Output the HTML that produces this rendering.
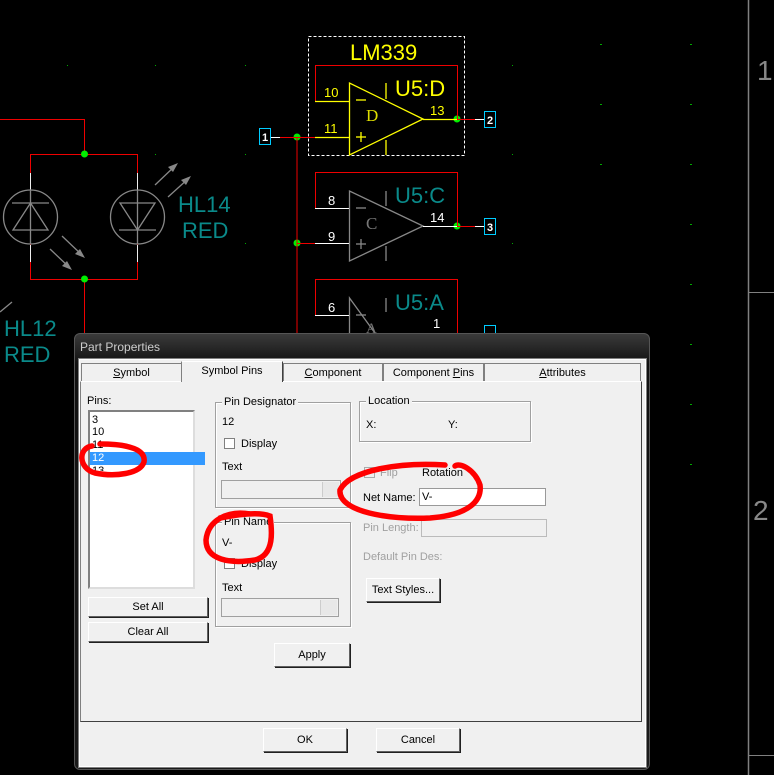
<!DOCTYPE html>
<html><head><meta charset="utf-8"><style>
body{margin:0;width:774px;height:775px;background:#000;overflow:hidden;position:relative;font-family:"Liberation Sans",sans-serif;}
.a{position:absolute;}
.t{position:absolute;font-size:11px;color:#000;white-space:nowrap;line-height:12px;}
.g{color:#a0a0a0;}
.btn{position:absolute;background:#f0f0f0;border:1px solid #fff;border-right-color:#606060;border-bottom-color:#606060;box-shadow:1px 1px 0 #202020;font-size:11px;text-align:center;box-sizing:border-box;}
.grp{position:absolute;border:1px solid #a0a0a0;box-shadow:1px 1px 0 #fff inset,1px 1px 0 #fff;}
.lg{position:absolute;background:#f0f0f0;font-size:11px;padding:0 2px;top:-7px;left:6px;line-height:12px;}
.cb{position:absolute;width:11px;height:11px;border:1px solid #808080;background:#fff;box-sizing:border-box;}
.combo{position:absolute;border:1px solid #a0a0a0;background:#f0f0f0;box-sizing:border-box;}
.combo:after{content:"";position:absolute;right:1px;top:1px;width:16px;bottom:1px;background:#e8e8e8;border-left:1px solid #ccc;}
.tab{position:absolute;top:363px;height:18px;border:1px solid #808080;border-bottom:none;background:#f0f0f0;font-size:11px;text-align:center;line-height:18px;box-sizing:border-box;}
</style></head><body>
<svg class="a" style="left:0;top:0" width="774" height="775">
<g fill="#0a0">
<rect x="67" y="65" width="1" height="1"/><rect x="155" y="65" width="1" height="1"/><rect x="245" y="65" width="1" height="1"/><rect x="512" y="65" width="1" height="1"/><rect x="600" y="44" width="2" height="1"/><rect x="690" y="44" width="2" height="1"/>
<rect x="155" y="154" width="1" height="1"/><rect x="245" y="154" width="1" height="1"/><rect x="512" y="154" width="1" height="1"/><rect x="600" y="104" width="2" height="1"/><rect x="690" y="104" width="2" height="1"/><rect x="600" y="164" width="2" height="1"/><rect x="690" y="164" width="2" height="1"/>
<rect x="245" y="243" width="1" height="1"/><rect x="512" y="243" width="1" height="1"/><rect x="690" y="224" width="2" height="1"/><rect x="690" y="284" width="2" height="1"/><rect x="690" y="344" width="2" height="1"/><rect x="690" y="404" width="2" height="1"/><rect x="690" y="464" width="2" height="1"/>
</g>
<line x1="748.5" y1="0" x2="748.5" y2="775" stroke="#808080" stroke-width="1.5"/>
<line x1="748" y1="292.5" x2="774" y2="292.5" stroke="#808080"/>
<line x1="748" y1="755.5" x2="774" y2="755.5" stroke="#808080"/>
<text x="757" y="80" fill="#888" font-size="28" font-family="Liberation Sans">1</text>
<text x="753" y="520" fill="#888" font-size="28" font-family="Liberation Sans">2</text>
<!-- LED section -->
<g fill="none" stroke="#e00" stroke-width="1">
<polyline points="0,119.5 84.5,119.5 84.5,154"/>
<rect x="30.5" y="154.5" width="107" height="125"/>
<line x1="84.5" y1="279" x2="84.5" y2="340"/>
</g>
<g stroke="#eee"><line x1="30.5" y1="173" x2="30.5" y2="195"/><line x1="30.5" y1="245" x2="30.5" y2="262"/><line x1="137.5" y1="173" x2="137.5" y2="195"/><line x1="137.5" y1="245" x2="137.5" y2="262"/></g>
<g stroke="#888" fill="none" stroke-width="1.3">
<circle cx="30.5" cy="217" r="27"/><circle cx="137.5" cy="217" r="27"/>
<line x1="30.5" y1="190" x2="30.5" y2="244"/><line x1="12" y1="203" x2="49" y2="203"/><polygon points="30.5,203 13,230 48,230"/>
<line x1="137.5" y1="190" x2="137.5" y2="244"/><line x1="119" y1="230" x2="156" y2="230"/><polygon points="137.5,230 120,203 155,203"/>
<line x1="155" y1="185" x2="176" y2="165"/><line x1="168" y1="197" x2="189" y2="178"/>
<line x1="62" y1="236" x2="83" y2="256"/><line x1="50" y1="249" x2="70" y2="268"/>
<line x1="0" y1="312" x2="12" y2="302"/>
</g>
<g fill="#888"><polygon points="178,163 168,167 173,172"/><polygon points="191,176 181,180 186,185"/><polygon points="85,258 75,254 80,249"/><polygon points="72,270 62,266 67,261"/></g>
<g fill="#0e0"><circle cx="84.5" cy="154" r="3.5"/><circle cx="84.5" cy="279" r="3.5"/><circle cx="297" cy="137" r="3.5"/><circle cx="297" cy="243" r="3.5"/><circle cx="457" cy="119" r="3.5"/><circle cx="457" cy="226" r="3.5"/><circle cx="297" cy="349" r="4" opacity=".6"/></g>
<g font-family="Liberation Sans" font-size="22" fill="#0a8a8a">
<text x="178" y="212">HL14</text><text x="182" y="238">RED</text>
<text x="4" y="336">HL12</text><text x="4" y="362">RED</text>
</g>
<!-- U5 -->
<rect x="308.5" y="36.5" width="156" height="119" fill="none" stroke="#fff" stroke-dasharray="3,2"/>
<text x="350" y="60" fill="#ff0" font-size="22" font-family="Liberation Sans">LM339</text>
<g fill="none" stroke="#e00">
<polyline points="315.5,101 315.5,65.5 457.5,65.5 457.5,119"/>
<polyline points="315.5,208 315.5,172.5 457.5,172.5 457.5,226"/>
<polyline points="315.5,315 315.5,279.5 457.5,279.5 457.5,333"/>
<line x1="297" y1="137" x2="297" y2="340"/>
<line x1="280" y1="137.5" x2="315" y2="137.5"/>
<line x1="297" y1="243.5" x2="315" y2="243.5"/>
<line x1="457" y1="119.5" x2="475" y2="119.5"/><line x1="457" y1="226.5" x2="475" y2="226.5"/>
</g>
<g stroke="#ff0" fill="none" stroke-width="1.3">
<polygon points="349.5,83 349.5,155 423,119"/><line x1="315" y1="101.5" x2="349" y2="101.5"/><line x1="315" y1="137.5" x2="349" y2="137.5"/><line x1="423" y1="119.5" x2="457" y2="119.5"/>
<line x1="386" y1="83" x2="386" y2="99"/><line x1="386" y1="140" x2="386" y2="155"/>
<line x1="356" y1="100" x2="366" y2="100"/><line x1="356" y1="137" x2="366" y2="137"/><line x1="361" y1="132" x2="361" y2="142"/>
</g>
<g fill="#ff0" font-family="Liberation Sans"><text x="395" y="96" font-size="22">U5:D</text><text x="366" y="121" font-size="17" font-family="Liberation Serif" fill="#dd0">D</text><text x="324" y="97" font-size="13">10</text><text x="324" y="133" font-size="13">11</text><text x="430" y="115" font-size="13">13</text></g>
<g stroke="#888" fill="none" stroke-width="1.3">
<polygon points="349.5,191 349.5,261 423,226"/><line x1="386" y1="191" x2="386" y2="206"/><line x1="386" y1="246" x2="386" y2="261"/>
<line x1="356" y1="208" x2="366" y2="208"/><line x1="356" y1="244" x2="366" y2="244"/><line x1="361" y1="239" x2="361" y2="249"/>
<polygon points="349.5,298 349.5,340 380,340"/><line x1="386" y1="298" x2="386" y2="312"/><line x1="356" y1="315" x2="366" y2="315"/>
</g>
<g stroke="#fff"><line x1="315" y1="208.5" x2="349" y2="208.5"/><line x1="315" y1="243.5" x2="349" y2="243.5"/><line x1="423" y1="226.5" x2="457" y2="226.5"/><line x1="315" y1="315.5" x2="349" y2="315.5"/><line x1="270" y1="137.5" x2="280" y2="137.5"/><line x1="475" y1="119.5" x2="484" y2="119.5"/><line x1="475" y1="226.5" x2="484" y2="226.5"/></g>
<g font-family="Liberation Sans"><text x="395" y="203" font-size="22" fill="#0a8a8a">U5:C</text><text x="395" y="310" font-size="22" fill="#0a8a8a">U5:A</text>
<text x="366" y="229" font-size="17" font-family="Liberation Serif" fill="#777">C</text><text x="366" y="333" font-size="15" font-family="Liberation Serif" fill="#777">A</text>
<g fill="#fff" font-size="13"><text x="328" y="205">8</text><text x="328" y="241">9</text><text x="430" y="222">14</text><text x="328" y="312">6</text><text x="433" y="328">1</text></g></g>
<g fill="none" stroke="#0cf"><rect x="259.5" y="128.5" width="11" height="16"/><rect x="484.5" y="111.5" width="11" height="16"/><rect x="484.5" y="218.5" width="11" height="16"/><rect x="484.5" y="325.5" width="11" height="10"/></g>
<g fill="#fff" font-size="11" font-weight="bold" font-family="Liberation Sans"><text x="262" y="141">1</text><text x="487" y="124">2</text><text x="487" y="231">3</text></g>
</svg>

<!-- Dialog -->
<div class="a" style="left:74px;top:333px;width:576px;height:437px;background:linear-gradient(#3a3a3a,#111 30px,#1a1a1a);border-radius:6px;border:1px solid #555;box-sizing:border-box;"></div>
<div class="t" style="left:80px;top:341px;color:#ccc;font-size:12px;">Part Properties</div>
<div class="a" style="left:79px;top:359px;width:565px;height:406px;background:#f0f0f0;border:1px solid #fff;box-shadow:0 0 0 1px #808080;"></div>
<div class="a" style="left:80px;top:381px;width:562px;height:341px;border:1px solid #808080;border-top:1px solid #fff;border-right-color:#404040;border-bottom-color:#404040;box-sizing:border-box;"></div>
<div class="tab" style="left:81px;width:101px;"><u>S</u>ymbol</div>
<div class="tab" style="left:181px;width:102px;top:361px;height:21px;border-color:#fff;border-right-color:#404040;border-left-color:#808080;z-index:2;">Symbol Pins</div>
<div class="tab" style="left:283px;width:100px;"><u>C</u>omponent</div>
<div class="tab" style="left:383px;width:101px;">Component <u>P</u>ins</div>
<div class="tab" style="left:484px;width:157px;"><u>A</u>ttributes</div>

<div class="t" style="left:87px;top:395px;">Pins:</div>
<div class="a" style="left:88px;top:410px;width:107px;height:179px;background:#fff;border:2px solid #808080;border-right-color:#ddd;border-bottom-color:#ddd;box-sizing:border-box;"></div>
<div class="t" style="left:92px;top:414px;">3</div>
<div class="t" style="left:92px;top:426px;">10</div>
<div class="t" style="left:92px;top:439px;">11</div>
<div class="a" style="left:90px;top:452px;width:115px;height:13px;background:#3399ff;"></div>
<div class="t" style="left:92px;top:452px;color:#fff;">12</div>
<div class="t" style="left:92px;top:465px;height:6px;overflow:hidden;">13</div>

<div class="grp" style="left:215px;top:402px;width:134px;height:104px;"><span class="lg">Pin Designator</span></div>
<div class="t" style="left:222px;top:416px;">12</div>
<div class="cb" style="left:224px;top:438px;"></div><div class="t" style="left:241px;top:438px;">Display</div>
<div class="t" style="left:222px;top:461px;">Text</div>
<div class="combo" style="left:221px;top:480px;width:120px;height:19px;"></div>

<div class="grp" style="left:215px;top:522px;width:134px;height:103px;"><span class="lg">Pin Name</span></div>
<div class="t" style="left:222px;top:537px;">V-</div>
<div class="cb" style="left:224px;top:558px;"></div><div class="t" style="left:241px;top:558px;">Display</div>
<div class="t" style="left:222px;top:582px;">Text</div>
<div class="combo" style="left:221px;top:598px;width:118px;height:19px;"></div>

<div class="grp" style="left:359px;top:401px;width:170px;height:39px;"><span class="lg">Location</span></div>
<div class="t" style="left:366px;top:419px;">X:</div><div class="t" style="left:448px;top:419px;">Y:</div>

<div class="cb" style="left:364px;top:467px;background:#f0f0f0;border-color:#aaa;"></div>
<div class="t g" style="left:365px;top:466px;font-size:10px;">✓</div>
<div class="t g" style="left:380px;top:467px;">Flip</div>
<div class="t" style="left:422px;top:467px;">Rotation</div>
<div class="t" style="left:363px;top:492px;">Net Name:</div>
<div class="a" style="left:419px;top:488px;width:127px;height:18px;background:#fff;border:1px solid #999;box-sizing:border-box;"></div>
<div class="t" style="left:422px;top:491px;">V-</div>
<div class="t g" style="left:363px;top:522px;">Pin Length:</div>
<div class="a" style="left:421px;top:519px;width:126px;height:18px;border:1px solid #bbb;box-sizing:border-box;"></div>
<div class="t g" style="left:363px;top:551px;">Default Pin Des:</div>
<div class="btn" style="left:366px;top:578px;width:74px;height:24px;line-height:22px;">Text Styles...</div>

<div class="btn" style="left:88px;top:597px;width:120px;height:20px;line-height:18px;">Set All</div>
<div class="btn" style="left:88px;top:622px;width:120px;height:20px;line-height:18px;">Clear All</div>
<div class="btn" style="left:274px;top:643px;width:76px;height:24px;line-height:22px;">Apply</div>
<div class="btn" style="left:263px;top:728px;width:84px;height:24px;line-height:22px;">OK</div>
<div class="btn" style="left:376px;top:728px;width:84px;height:24px;line-height:22px;">Cancel</div>

<svg class="a" style="left:0;top:0;z-index:5" width="774" height="775">
<g fill="none" stroke="#f00" stroke-width="5.5" stroke-linecap="round">
<path d="M92,446 C78,448 78,468 95,473 C115,477 140,474 144,462 C146,450 130,444 100,444"/>
<path d="M250,514 C228,510 208,520 206,540 C206,560 230,564 255,560 C275,555 272,530 270,516 C260,512 240,514 220,518"/>
<path d="M445,465 C400,462 350,470 340,490 C338,512 390,520 430,518 C470,515 482,500 480,485 C475,470 460,462 455,466"/>
</g></svg>
</body></html>
